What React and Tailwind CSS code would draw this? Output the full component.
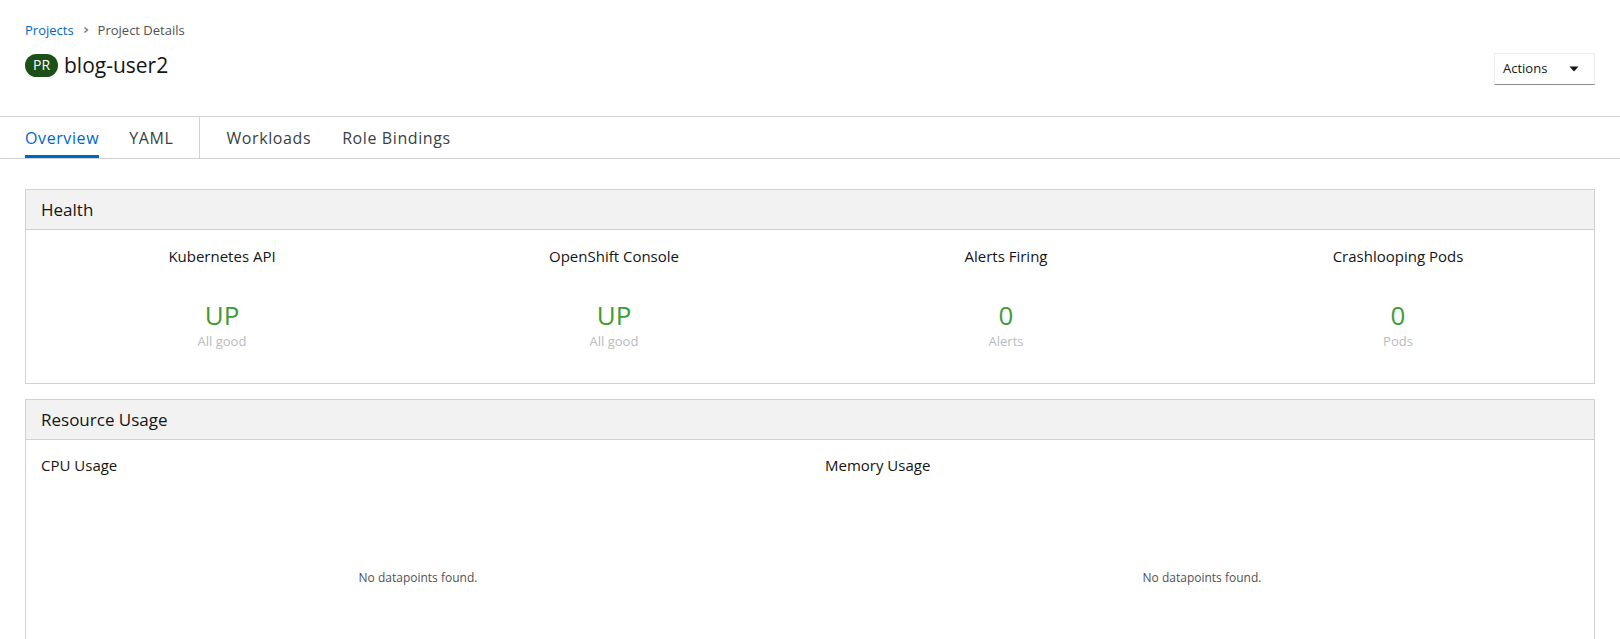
const font = { fontFamily: '"Open Sans", "Liberation Sans", sans-serif' };

const health = [
  { title: 'Kubernetes API', value: 'UP', sub: 'All good' },
  { title: 'OpenShift Console', value: 'UP', sub: 'All good' },
  { title: 'Alerts Firing', value: '0', sub: 'Alerts' },
  { title: 'Crashlooping Pods', value: '0', sub: 'Pods' },
];

function Card({ title, children }) {
  return (
    <div className="border border-[#d1d1d1] bg-white">
      <div className="h-[40px] bg-[#f2f2f2] border-b border-[#d1d1d1] px-[15px] flex items-center text-[17px] text-[#151515]">
        {title}
      </div>
      {children}
    </div>
  );
}

export default function App() {
  return (
    <div className="min-h-[639px] bg-white text-[#151515]" style={font}>
      {/* Page header */}
      <div className="px-[25px] pt-[21px] pb-[31px] border-b border-[#d1d1d1]">
        <div className="flex items-center gap-[8px] text-[13px] leading-[18px]">
          <span className="text-[#0066cc]">Projects</span>
          <svg width="8" height="8" viewBox="0 0 8 8" className="text-[#737679]">
            <path d="M2.5 1.5 L5.5 4 L2.5 6.5" fill="none" stroke="currentColor" strokeWidth="1.4" />
          </svg>
          <span className="text-[#4f5255]">Project Details</span>
        </div>
        <div className="flex justify-between items-start">
          <h1 className="mt-[14px] flex items-center gap-[6px] text-[21px] leading-[24px] font-normal">
            <span className="inline-flex items-center justify-center h-[23px] w-[33px] rounded-full bg-[#1e4f18] text-white text-[14px]">PR</span>
            blog-user2
          </h1>
          <button className="mt-[14px] h-[32px] w-[101px] border border-[#ededed] border-b-[#8b8d8f] flex items-center justify-between pl-[8px] pr-[15px] text-[13px] text-[#151515] bg-white">
            Actions
            <svg width="10" height="6" viewBox="0 0 10 6">
              <path d="M0.5 0.5 H9.5 L5 5.5 Z" fill="#151515" />
            </svg>
          </button>
        </div>
      </div>

      {/* Tabs */}
      <div className="flex h-[42px] border-b border-[#d1d1d1] px-[25px] text-[16px] tracking-[0.6px]">
        <div className="flex items-stretch gap-[30px] pr-[26px] border-r border-[#d1d1d1]">
          <span className="flex items-center text-[#0066cc] border-b-[3px] border-[#0066cc] pt-[3px]">Overview</span>
          <span className="flex items-center text-[#393f44]">YAML</span>
        </div>
        <div className="flex items-center gap-[31px] pl-[26px] text-[#393f44]">
          <span>Workloads</span>
          <span>Role Bindings</span>
        </div>
      </div>

      {/* Content */}
      <div className="px-[25px] pt-[30px] flex flex-col gap-[15px]">
        <Card title="Health">
          <div className="grid grid-cols-4 h-[153px]">
            {health.map((h) => (
              <div key={h.title} className="flex flex-col items-center pt-[15px]">
                <div className="text-[15px] leading-[22px] text-[#151515]">{h.title}</div>
                <div className="mt-[33px] text-[26px] leading-[30px] text-[#3f9c35]">{h.value}</div>
                <div className="mt-[2px] text-[13px] leading-[18px] text-[#b8bbbe]">{h.sub}</div>
              </div>
            ))}
          </div>
        </Card>
        <Card title="Resource Usage">
          <div className="grid grid-cols-2 h-[240px]">
            {['CPU Usage', 'Memory Usage'].map((t) => (
              <div key={t} className="flex flex-col px-[15px] pt-[14px]">
                <div className="text-[15px] leading-[22px]">{t}</div>
                <div className="mt-[93px] text-center text-[12px] text-[#4f5255]">No datapoints found.</div>
              </div>
            ))}
          </div>
        </Card>
      </div>
    </div>
  );
}
